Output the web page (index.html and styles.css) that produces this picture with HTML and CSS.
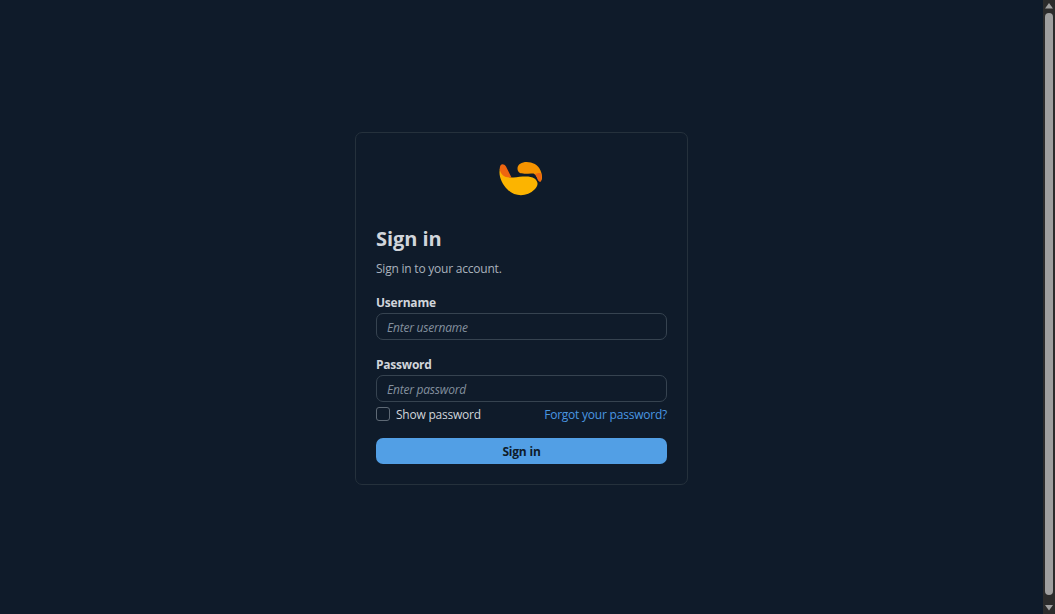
FILE: index.html
```html
<!DOCTYPE html>
<html lang="en">
<head>
<meta charset="utf-8">
<title>Sign in</title>
<link rel="stylesheet" href="styles.css">
</head>
<body>
<main class="page">
  <form class="card">
    <svg class="logo" viewBox="0.5 -0.6 64 56" aria-hidden="true">
      <path class="logo-leaf" d="M28 18C28 9 47 9 51 20C53 25 53 29 51 31C47 29 48 25 44 23C39 22 28 26 28 18Z"/>
      <path class="logo-shade" d="M45 23.5C49 22 51 22 51.8 23C52.4 27 52 30 50.8 31.5C47.5 31 48 25.5 45 23.5Z"/>
      <path class="logo-bowl" d="M11 16C15 24 17 27.500 24 26.800C31 26.500 40 24.500 45 28C50 32 48 36 45 39C38 46 26 47 18 39C12 33 8 24 11 16Z"/>
      <path class="logo-shade" d="M10.300 19C9.800 13 14 12 16.500 16L22 26.800C16 28 10.800 24 10.300 19Z"/>
    </svg>
    <h1 class="title">Sign in</h1>
    <p class="lead">Sign in to your account.</p>
    <label class="label" for="user">Username</label>
    <input class="input" id="user" type="text" placeholder="Enter username">
    <label class="label label-next" for="pass">Password</label>
    <input class="input" id="pass" type="password" placeholder="Enter password">
    <div class="options">
      <label class="show"><input class="check" type="checkbox"><span class="show-text">Show password</span></label>
      <a class="link" href="#">Forgot your password?</a>
    </div>
    <button class="submit" type="button">Sign in</button>
  </form>
</main>
<div class="scrollbar" aria-hidden="true">
  <svg class="arrow" viewBox="0 0 12 13"><path d="M6 3L10 8.500H2Z"/></svg>
  <div class="thumb"></div>
  <svg class="arrow arrow-down" viewBox="0 0 12 19"><path d="M2 10H10L6 15.500Z"/></svg>
</div>
</body>
</html>
```

FILE: styles.css
```css
* { box-sizing: border-box; }
body {
  margin: 0;
  height: 614px;
  display: flex;
  overflow: hidden;
  background: #0f1b2a;
  color: #d1d5db;
  font: 12px/18px "Open Sans", sans-serif;
  letter-spacing: -0.22px;
}
.page {
  flex: 1;
  display: flex;
  align-items: flex-start;
  justify-content: center;
  padding-top: 132px;
}
.card {
  width: 333px;
  height: 353px;
  padding: 17px 20px 0;
  border: 1px solid #25313c;
  border-radius: 7px;
  display: flex;
  flex-direction: column;
}
.logo { width: 64px; height: 56px; align-self: center; }
.logo-leaf { fill: #f59300; }
.logo-bowl { fill: #fcb400; }
.logo-shade { fill: #ee6510; }
.title { margin: 19px 0 0; font-size: 20px; line-height: 28px; font-weight: 700; letter-spacing: -0.05px; }
.lead { margin: 7px 0 0; color: #a9b2bd; }
.label { margin-top: 16px; font-weight: 700; line-height: 18px; }
.input {
  width: 100%;
  height: 27px;
  margin: 1px 0 0;
  padding: 1px 10px 0;
  border: 1px solid #364350;
  border-radius: 7px;
  outline: 0;
  background: transparent;
  color: #d1d5db;
  font: 12px/18px "Open Sans", sans-serif;
  letter-spacing: -0.22px;
}
.input::placeholder { color: #83909e; opacity: 1; font-style: italic; }
.label-next { margin-top: 16px; }
.options { display: flex; justify-content: space-between; margin-top: 3px; }
.show { display: flex; align-items: center; gap: 6px; }
.show-text, .link { padding-top: 1px; line-height: 17px; }
.check {
  appearance: none;
  width: 14px;
  height: 14px;
  margin: 0;
  border: 1px solid #5e6975;
  border-radius: 3px;
}
.link { color: #4a97e2; text-decoration: none; }
.submit {
  height: 26px;
  margin-top: 15px;
  padding: 1px 0 0;
  border: 0;
  border-radius: 7px;
  background: #529fe5;
  color: #0f1b2a;
  font: 700 12px/18px "Open Sans", sans-serif;
  letter-spacing: -0.2px;
}
.scrollbar { width: 12px; display: flex; flex-direction: column; align-items: center; background: #2b2b2b; }
.arrow { width: 12px; height: 13px; fill: #9f9f9f; }
.arrow-down { height: 19px; }
.thumb { flex: 1; width: 8px; border-radius: 4px; background: #9f9f9f; }
```
